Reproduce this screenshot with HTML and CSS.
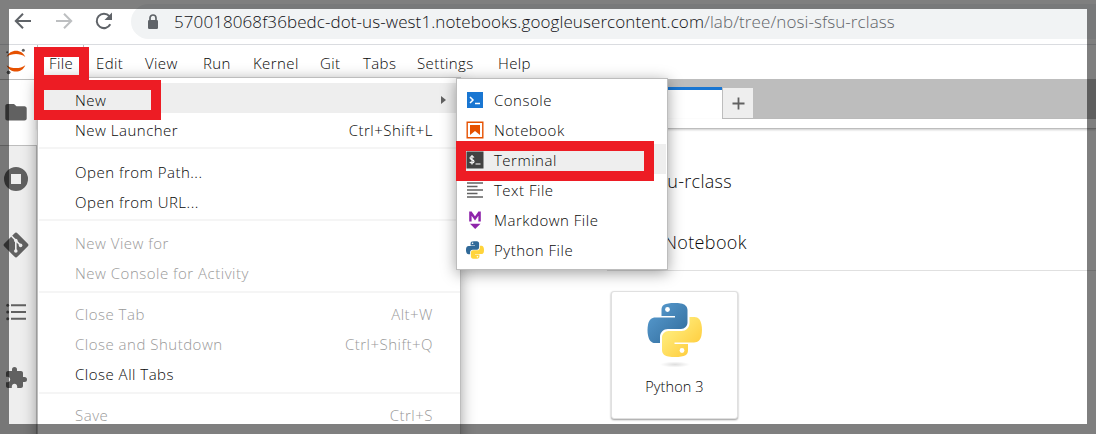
FILE: index.html
```
<!DOCTYPE html>
<html lang="en">
<head>
<meta charset="utf-8">
<title>JupyterLab</title>
<link rel="stylesheet" href="styles.css">
</head>
<body>
<svg class="defs" width="0" height="0">
  <defs>
    <linearGradient id="pyb" x1="0" y1="0" x2="1" y2="1"><stop offset="0" stop-color="#5a9fd4"/><stop offset="1" stop-color="#306998"/></linearGradient>
    <linearGradient id="pyy" x1="1" y1="1" x2="0" y2="0"><stop offset=".3" stop-color="#ffe873"/><stop offset="1" stop-color="#ffc52e"/></linearGradient>
    <radialGradient id="pys"><stop offset="0" stop-color="#000" stop-opacity=".13"/><stop offset="1" stop-color="#000" stop-opacity="0"/></radialGradient>
    <path id="snake-a" d="M26.900 0C22.500 0 18.500.6 16.500 1.800 14.500 3 14 4.700 14 7v6h13.500v1.500H8C4 14.500 1.500 17 .6 21.200c-.8 3.800-.8 7.800 0 11.500C1.500 37 3.500 40 7.500 40H12.500v-6c0-4.500 3.500-8 8-8H33.500c3.700 0 6.500-3 6.500-6.500V7c0-3.500-2.700-6-6.500-6.500C31.500.1 29 0 26.900 0z"/>
  </defs>
</svg>
<div class="screen">
  <header class="address">
    <svg class="nav" width="20" height="20" viewBox="0 0 20 20"><path d="M18 10H3M10 2.800 2.800 10l7.200 7.200" fill="none" stroke="#5f6368" stroke-width="2"/></svg>
    <svg class="nav fwd" width="20" height="20" viewBox="0 0 20 20"><path d="M2 10h15M10 2.800l7.200 7.200-7.200 7.200" fill="none" stroke="#bdbfc1" stroke-width="2"/></svg>
    <svg class="nav reload" width="20" height="20" viewBox="0 0 20 20"><path d="M16.300 13.300A7.200 7.200 0 1 1 15.400 5.200" fill="none" stroke="#5f6368" stroke-width="2"/><path d="M18 1.500V9h-7.500z" fill="#5f6368"/></svg>
    <div class="pill">
      <svg class="lock" width="12" height="16" viewBox="0 0 12 16"><path d="M3 7V4a3 3 0 0 1 6 0v3" fill="none" stroke="#5f6368" stroke-width="1.700"/><rect x="1" y="6" width="10" height="9" rx="1.200" fill="#5f6368"/></svg>
      <span class="url">570018068f36bedc-dot-us-west1.notebooks.googleusercontent.com<span class="path">/lab/tree/nosi-sfsu-rclass</span></span>
    </div>
  </header>
  <nav class="menubar">
    <svg class="jupyter" width="22" height="27" viewBox="0 0 22 27"><path d="M1.500 9C3.500 5 7 2.800 11 2.800s7.500 2.200 9.300 6.200C17.500 7 14.500 6.100 11 6.100S4 7 1.500 9z" fill="#e65100"/><path d="M1.500 17.200C3.500 21.500 7 23.500 11 23.500s7.500-2 9.300-6.300c-2.800 2-5.800 2.800-9.300 2.800s-7-.8-9.500-2.800z" fill="#e65100"/><circle cx="18.300" cy="2.200" r="1.500" fill="#616161"/><circle cx="2.200" cy="4.300" r="1" fill="#616161"/><circle cx="3.600" cy="24.300" r="1.900" fill="#616161"/></svg>
    <span class="entry active">File</span><span class="entry">Edit</span><span class="entry view">View</span><span class="entry run">Run</span><span class="entry kernel">Kernel</span><span class="entry git">Git</span><span class="entry tabs">Tabs</span><span class="entry settings">Settings</span><span class="entry">Help</span>
  </nav>
  <main class="lab">
    <aside class="sidebar">
      <div class="side current"><svg width="24" height="24" viewBox="0 0 24 24"><path d="M10 4H3.500C2.200 4 1.300 4.900 1.300 6v12.500c0 1.100.9 2 2.200 2h17c1.200 0 2.200-.9 2.200-2V8.500c0-1.200-1-2.200-2.200-2.200h-8z"/></svg></div>
      <div class="side"><svg width="24" height="24" viewBox="0 0 24 24"><path fill-rule="evenodd" d="M12 0a12 12 0 1 0 0 24 12 12 0 0 0 0-24zM7 7h10v10H7z"/></svg></div>
      <div class="side"><svg width="26" height="26" viewBox="0 0 26 26"><path d="M11.400 1.400a2.200 2.200 0 0 1 3.200 0l10 10a2.200 2.200 0 0 1 0 3.200l-10 10a2.200 2.200 0 0 1-3.200 0l-10-10a2.200 2.200 0 0 1 0-3.200z"/><path class="cut" d="M8.500 4 17.600 13.400M12.800 8v12"/><circle class="dot" cx="12.800" cy="8.600" r="1.800"/><circle class="dot" cx="12.800" cy="19" r="1.800"/><circle class="dot" cx="17.600" cy="13.400" r="1.800"/></svg></div>
      <div class="side"><svg width="20" height="18" viewBox="0 0 20 18"><path d="M5 1.200h15v2H5zM5 8h15v2H5zM5 14.700h15v2H5z"/><circle cx="1.700" cy="2.200" r="1.500"/><circle cx="1.700" cy="9" r="1.500"/><circle cx="1.700" cy="15.700" r="1.500"/></svg></div>
      <div class="side"><svg width="24" height="24" viewBox="0 0 24 24"><path d="M20.500 11H19V7c0-1.100-.9-2-2-2h-4V3.500a2.500 2.500 0 0 0-5 0V5H4c-1.100 0-2 .9-2 2v3.800h1.500c1.500 0 2.700 1.200 2.700 2.700S5 16.200 3.500 16.200H2V20c0 1.100.9 2 2 2h3.800v-1.500c0-1.500 1.200-2.700 2.700-2.700s2.700 1.200 2.700 2.700V22H17c1.100 0 2-.9 2-2v-4h1.500a2.500 2.500 0 0 0 0-5z"/></svg></div>
    </aside>
    <section class="dock">
      <div class="tabbar"><div class="tab"></div><div class="add"><svg width="13" height="13" viewBox="0 0 13 13"><path d="M6.500 .5v12M.5 6.500h12" stroke="#616161" stroke-width="1.800"/></svg></div></div>
      <div class="toolbar"></div>
      <div class="launcher">
        <h1 class="cwd">nosi-sfsu-rclass</h1>
        <h2 class="section">Notebook</h2>
        <div class="card">
          <svg width="56" height="65" viewBox="0 0 56 65"><use href="#snake-a" transform="translate(.5 0)" fill="url(#pyb)"/><use href="#snake-a" transform="rotate(180 27.500 27)" fill="url(#pyy)"/><circle cx="20.500" cy="6.500" r="2.400" fill="#fff"/><circle cx="35" cy="47.500" r="2.400" fill="#fff"/><ellipse cx="28" cy="61.500" rx="15" ry="3" fill="url(#pys)"/></svg>
          <span class="kernel-name">Python 3</span>
        </div>
      </div>
    </section>
  </main>

  <div class="menu file-menu">
    <div class="item hover"><span>New</span><i class="arrow"></i></div>
    <div class="item"><span>New Launcher</span><kbd>Ctrl+Shift+L</kbd></div>
    <div class="sep"></div>
    <div class="item"><span>Open from Path...</span></div>
    <div class="item"><span>Open from URL...</span></div>
    <div class="sep"></div>
    <div class="item off"><span>New View for</span></div>
    <div class="item off"><span>New Console for Activity</span></div>
    <div class="sep"></div>
    <div class="item off"><span>Close Tab</span><kbd>Alt+W</kbd></div>
    <div class="item off"><span>Close and Shutdown</span><kbd>Ctrl+Shift+Q</kbd></div>
    <div class="item"><span>Close All Tabs</span></div>
    <div class="sep"></div>
    <div class="item off"><span>Save</span><kbd>Ctrl+S</kbd></div>
  </div>

  <div class="menu new-menu">
    <div class="item"><svg width="18" height="18" viewBox="0 0 18 18"><path fill="#1976d2" d="M1 1h16v16H1z"/><path d="M4 6l3 3-3 3M9 12.500h5" fill="none" stroke="#fff" stroke-width="1.500"/></svg><span>Console</span></div>
    <div class="item"><svg width="18" height="18" viewBox="0 0 18 18"><path d="M1.200 1.200h15.600v15.600H1.200z" fill="#fff" stroke="#e65100" stroke-width="1.400"/><path d="M4 4h10v10l-5-4-5 4z" fill="#e65100"/></svg><span>Notebook</span></div>
    <div class="item hover"><svg width="18" height="18" viewBox="0 0 18 18"><path fill="#424242" d="M.5.5h17v17H.5z"/><path d="M8 6.500C7 5 4 5.200 4 7c0 2 4 1.300 4 3.500 0 1.900-3.200 2-4.300.4M6 4v9.500M9.500 13h5" fill="none" stroke="#fff" stroke-width="1.200"/></svg><span>Terminal</span></div>
    <div class="item"><svg width="18" height="18" viewBox="0 0 18 18"><path d="M1 2h16M1 5.500h10.500M1 9h16M1 12.500h10.500M1 16h16" stroke="#616161" stroke-width="1.500"/></svg><span>Text File</span></div>
    <div class="item"><svg width="18" height="18" viewBox="0 0 18 18"><path d="M4.400 10.500V.5M13.600 10.500V.5M4.400 1 9 7.500 13.600 1" fill="none" stroke="#8e24aa" stroke-width="2.400"/><path d="M4 12.800h10.500L9.200 18z" fill="#8e24aa"/></svg><span>Markdown File</span></div>
    <div class="item"><svg width="18" height="18" viewBox="0 0 55 54"><use href="#snake-a" fill="#306998"/><use href="#snake-a" transform="rotate(180 27.500 27)" fill="#ffd43b"/><circle cx="20" cy="6.500" r="2.500" fill="#fff"/><circle cx="35" cy="47.500" r="2.500" fill="#fff"/></svg><span>Python File</span></div>
  </div>

  <div class="mark mark-file"></div>
  <div class="mark mark-new"></div>
  <div class="mark mark-terminal"></div>
  <div class="frame"></div>
</div>
</body>
</html>
```
FILE: styles.css
```
* { box-sizing: border-box; }
body { margin: 0; font-family: "Open Sans", "Noto Sans", sans-serif; font-weight: 360; color: #080808; }
.defs { position: absolute; }
.screen { position: relative; width: 1096px; height: 434px; overflow: hidden; background: #fff; display: flex; flex-direction: column; }

.address { height: 45px; flex: none; display: flex; align-items: center; padding-left: 13px; padding-bottom: 2px; border-bottom: 1px solid #dadce0; }
.nav { flex: none; }
.fwd { margin-left: 21px; }
.reload { margin-left: 20px; }
.pill { flex: 1; align-self: flex-start; height: 35px; margin: 4px 0 0 17px; padding-left: 16px; background: #f1f3f4; border-radius: 18px 0 0 18px; display: flex; align-items: center; }
.lock { flex: none; margin-right: 15px; }
.url { font-size: 17px; line-height: 24px; white-space: nowrap; color: #101114; letter-spacing: .09px; }
.path { color: #5f6368; }

.menubar { height: 34px; flex: none; display: flex; font-size: 15px; line-height: 36px; padding-left: 5px; letter-spacing: .4px; }
.jupyter { margin: 3px 10px 0 0; flex: none; }
.entry { width: 49px; flex: none; padding-left: 10px; height: 34px; white-space: nowrap; }
.active { width: 47px; padding-left: 11px; border: 1px solid #bdbdbd; border-width: 0 1px; margin-right: 2px; }
.view { width: 58px; }
.run { width: 50px; }
.kernel { width: 67px; }
.git { width: 43px; }
.tabs { width: 54px; }
.settings { width: 81px; }

.lab { flex: 1; display: flex; min-height: 0; }
.sidebar { width: 37px; background: #eee; border-right: 1px solid #bdbdbd; border-top: 1px solid #bdbdbd; flex: none; }
.side { height: 66.500px; width: 32px; display: flex; align-items: center; justify-content: center; fill: #616161; }
.current { height: 66px; width: 37px; padding: 0 5px 2px 0; background: #fff; border-bottom: 1px solid #bdbdbd; }
.side + .side { padding-bottom: 1px; }
.cut { fill: none; stroke: #eee; stroke-width: 1.600; }
.dot { fill: #eee; }

.dock { flex: 1; display: flex; flex-direction: column; min-width: 0; }
.tabbar { height: 40px; background: #bdbdbd; padding: 8px 0 0 470px; display: flex; }
.tab { width: 215px; background: #fff; border-top: 3px solid #1976d2; }
.add { width: 31px; height: 31px; margin-top: 1px; background: #eee; border: 1px solid #bdbdbd; border-top: 0; border-right: 0; display: flex; align-items: center; justify-content: center; }
.toolbar { height: 10px; border-bottom: 1px solid #bdbdbd; box-shadow: 0 1px 2px rgba(0,0,0,.2); }
.launcher { padding: 40px 0 0 570px; }
.cwd { margin: 0; width: 125px; font-size: 18px; line-height: 24px; font-weight: 350; letter-spacing: .3px; display: flex; justify-content: flex-end; white-space: nowrap; }
.section { margin: 34px 0 0; height: 44px; padding: 3px 0 0 57px; font-size: 18px; line-height: 24px; font-weight: 350; letter-spacing: .35px; border-bottom: 1px solid #e0e0e0; }
.card { width: 127px; height: 128px; margin: 20px 0 0 4px; border: 1px solid #e0e0e0; border-radius: 3px; background: #fff; box-shadow: 0 1px 2px rgba(0,0,0,.4); display: flex; flex-direction: column; align-items: center; padding-top: 11px; }
.kernel-name { font-size: 14.500px; line-height: 20px; margin-top: 9px; letter-spacing: .1px; }

.menu { position: absolute; background: #fff; border: 1px solid #bdbdbd; font-size: 15px; letter-spacing: .5px; box-shadow: 0 3px 14px rgba(0,0,0,.38); }
.file-menu { left: 37px; top: 77px; width: 424px; height: 400px; padding-top: 5.400px; }
.new-menu { left: 456px; top: 78px; width: 212px; height: 192px; padding: 5px 1px 0 0; }
.item { height: 30px; display: flex; align-items: center; line-height: 30px; padding-top: 3px; white-space: nowrap; }
.file-menu .item { padding-left: 37px; padding-right: 27px; justify-content: space-between; }
.new-menu .item { padding: 1px 0 0 9px; }
.new-menu svg { margin-right: 10px; flex: none; }
.item kbd { font: inherit; }
.hover { background: #eee; }
.off { color: #999; }
.arrow { border: 4px solid transparent; border-left: 5px solid #616161; border-right: 0; margin-right: -13px; }
.sep { height: 11.200px; padding-top: 4px; margin: 0 0 0 1px; }
.item:nth-child(2) + .sep { height: 12px; }
.sep::before { content: ""; display: block; height: 2px; background: #f5f5f5; }

.mark { position: absolute; border: 10px solid #ed1c24; }
.mark-file { left: 34px; top: 47px; width: 55px; height: 38px; }
.mark-new { left: 34px; top: 80px; width: 127px; height: 40px; }
.mark-terminal { left: 456px; top: 141px; width: 198px; height: 40px; }
.frame { position: absolute; inset: 0; border: 9px solid rgba(0,0,0,.5); border-bottom-width: 10px; }
```
